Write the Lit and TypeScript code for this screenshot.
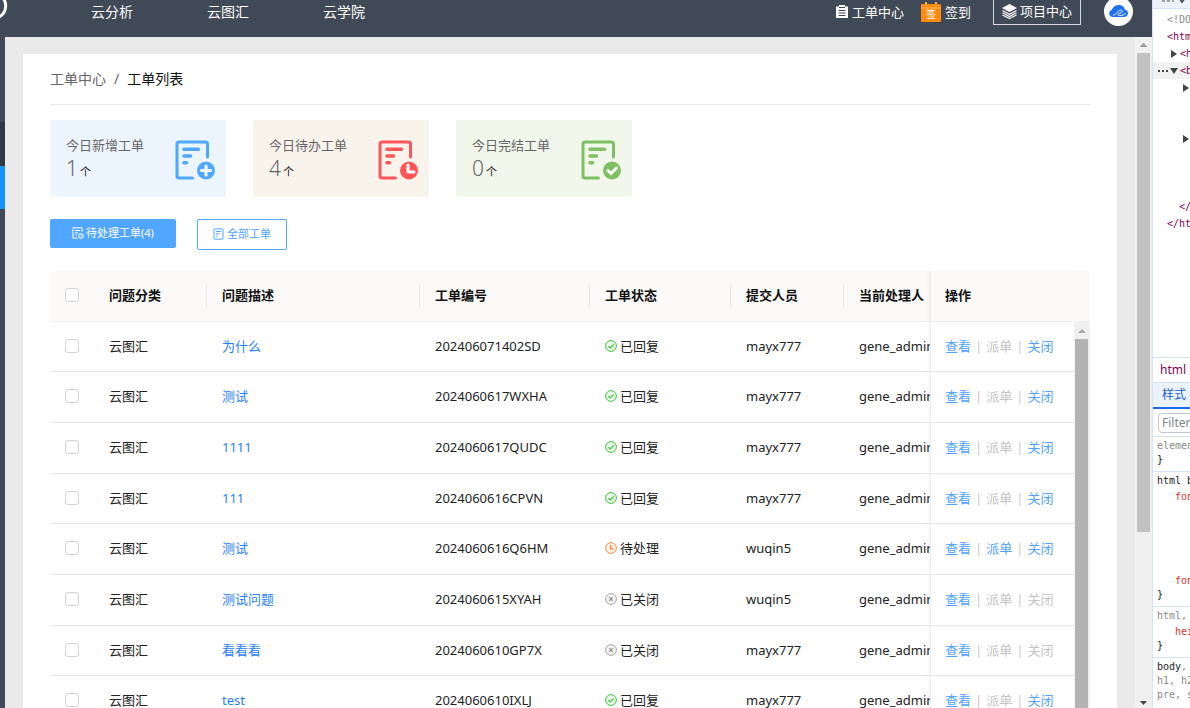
import { LitElement, html, css, svg } from "lit";
import { customElement, property } from "lit/decorators.js";
import { classMap } from "lit/directives/class-map.js";

type Status = "replied" | "pending" | "closed";

interface Ticket {
  category: string;
  title: string;
  code: string;
  status: Status;
  submitter: string;
  handler: string;
  canAssign: boolean;
  canClose: boolean;
}

const ticket = (
  title: string,
  code: string,
  status: Status,
  submitter: string,
  canAssign: boolean,
  canClose: boolean
): Ticket => ({ category: "云图汇", title, code, status, submitter, handler: "gene_admin", canAssign, canClose });

const TICKETS: Ticket[] = [
  ticket("为什么", "202406071402SD", "replied", "mayx777", false, true),
  ticket("测试", "2024060617WXHA", "replied", "mayx777", false, true),
  ticket("1111", "2024060617QUDC", "replied", "mayx777", false, true),
  ticket("111", "2024060616CPVN", "replied", "mayx777", false, true),
  ticket("测试", "2024060616Q6HM", "pending", "wuqin5", true, true),
  ticket("测试问题", "2024060615XYAH", "closed", "wuqin5", false, false),
  ticket("看看看", "2024060610GP7X", "closed", "mayx777", false, false),
  ticket("test", "2024060610IXLJ", "replied", "mayx777", false, true),
];

const STATUS_LABEL: Record<Status, string> = { replied: "已回复", pending: "待处理", closed: "已关闭" };

const STATUS_ICON = {
  replied: svg`<circle cx="6" cy="6" r="5.4" fill="#eefbea" stroke="#3cc13b"/><path d="M3.4 6.2l1.9 1.8 3.4-3.7" fill="none" stroke="#3cc13b" stroke-width="1.2"/>`,
  pending: svg`<circle cx="6" cy="6" r="5.4" fill="#fff3e8" stroke="#fa8c3c"/><path d="M5.7 3v3.8h2.8" fill="none" stroke="#fa7a2a" stroke-width="1.2"/>`,
  closed: svg`<circle cx="6" cy="6" r="5.4" fill="#f3f3f3" stroke="#a6a6a6"/><path d="M4.2 4.2l3.6 3.6M7.8 4.2l-3.6 3.6" fill="none" stroke="#8f8f8f" stroke-width="1.2"/>`,
};

const STAT_MARK = {
  add: svg`<path d="M31 26v9M26.500 30.500h9" stroke="#fff" stroke-width="3" stroke-linecap="round"/>`,
  wait: svg`<path d="M30 25v7h6" fill="none" stroke="#fff" stroke-width="3" stroke-linecap="round" stroke-linejoin="round"/>`,
  done: svg`<path d="M27 30.500l3 3 5.500-5.500" fill="none" stroke="#fff" stroke-width="3" stroke-linecap="round"/>`,
};

type Mark = keyof typeof STAT_MARK;

@customElement("stat-card")
class StatCard extends LitElement {
  @property() label = "";
  @property() count = "";
  @property() mark: Mark = "add";

  static styles = css`
    :host { display: block; }
    .card {
      display: flex;
      align-items: center;
      justify-content: space-between;
      box-sizing: border-box;
      height: 77px;
      padding: 2px 11px 0 16px;
      border-radius: 2px;
      color: #666;
    }
    .add { background: #ecf5fd; }
    .wait { background: #f8f4ec; }
    .done { background: #f1f7ea; }
    .label { font-size: 13px; line-height: 20px; margin: 0; }
    .value { font-size: 21px; line-height: 27px; margin: 0; font-weight: 300; }
    .unit { font-size: 11px; color: #111; font-weight: 400; margin-left: 2px; }
    .icon { width: 40px; height: 40px; flex: none; }
    .add .icon { color: #4fa8ff; }
    .wait .icon { color: #ff5558; }
    .done .icon { color: #7fc063; }
  `;

  render() {
    return html`
      <div class="card ${this.mark}">
        <div>
          <p class="label">${this.label}</p>
          <p class="value">${this.count}<span class="unit">个</span></p>
        </div>
        <svg class="icon" viewBox="0 0 40 40" aria-hidden="true">
          <g fill="none" stroke="currentColor" stroke-width="3" stroke-linecap="round">
            <path d="M32.500 17V4a2 2 0 0 0-2-2H4a2 2 0 0 0-2 2v32a2 2 0 0 0 2 2h13.500" />
            <path stroke-width="3.600" d="M9 9.200h14.500M9 16h6.500M9 22.700h2.500" />
          </g>
          <circle cx="31" cy="30.500" r="9" fill="currentColor" />
          ${STAT_MARK[this.mark]}
        </svg>
      </div>
    `;
  }
}

@customElement("ticket-table")
class TicketTable extends LitElement {
  @property({ attribute: false }) rows: Ticket[] = [];

  static styles = css`
    :host { display: flex; }
    table {
      flex: 1;
      width: 100%;
      min-width: 0;
      table-layout: fixed;
      border-collapse: separate;
      border-spacing: 0;
      font-size: 13px;
      line-height: 20px;
      color: #222;
    }
    .c-check { width: 44px; }
    .c-category { width: 113px; }
    .c-code { width: 170px; }
    .c-status { width: 141px; }
    .c-submitter { width: 113px; }
    .c-handler { width: 86px; }
    .c-action { width: 144px; }
    th, td {
      box-sizing: border-box;
      height: 51px;
      padding: 0 0 2px 15px;
      text-align: left;
      white-space: nowrap;
      overflow: hidden;
      border-bottom: 1px solid #e8e8e8;
    }
    tbody tr:nth-child(3n + 1) td { height: 50px; }
    th { background: #fbfaf9; font-weight: 600; color: #111; border-bottom-color: #edf1f5; }
    .divided { background: linear-gradient(#e8e8e8, #e8e8e8) right center / 1px 22px no-repeat #fbfaf9; }
    .fixed { padding-left: 14px; border-left: 1px solid #eee; box-shadow: -2px 0 2px rgba(0, 0, 0, 0.03); }
    input {
      appearance: none;
      display: block;
      width: 14px;
      height: 14px;
      margin: 0;
      box-sizing: border-box;
      border: 1px solid #d4d4d4;
      border-radius: 3px;
      background: #fff;
    }
    a { color: #2780fb; text-decoration: none; }
    .status { display: flex; align-items: center; gap: 3px; }
    .status svg { width: 12px; height: 12px; }
    .actions { display: flex; gap: 4px; color: #c8c8c8; }
    .actions button {
      padding: 0;
      border: 0;
      background: none;
      font: inherit;
      color: #4fa3ff;
    }
    .actions button:disabled { color: #c4c4c4; }
    .rail { display: flex; flex-direction: column; width: 16px; }
    .rail-head { height: 50px; background: #fbfaf9; border-bottom: 1px solid #edf1f5; }
    .track { flex: 1; background: #f0f0f0; display: flex; flex-direction: column; }
    .arrow { height: 17px; display: block; }
    .thumb { flex: 1; margin: 0 2px 0 1px; background: #b3b3b3; }
  `;

  render() {
    return html`
      <table>
        <colgroup>
          <col class="c-check" /><col class="c-category" /><col /><col class="c-code" /><col class="c-status" />
          <col class="c-submitter" /><col class="c-handler" /><col class="c-action" />
        </colgroup>
        <thead>
          <tr>
            <th><input type="checkbox" aria-label="全选" /></th>
            <th class="divided">问题分类</th>
            <th class="divided">问题描述</th>
            <th class="divided">工单编号</th>
            <th class="divided">工单状态</th>
            <th class="divided">提交人员</th>
            <th>当前处理人</th>
            <th class="fixed">操作</th>
          </tr>
        </thead>
        <tbody>
          ${this.rows.map(
            (t) => html`
              <tr>
                <td><input type="checkbox" aria-label=${t.code} /></td>
                <td>${t.category}</td>
                <td><a href="#">${t.title}</a></td>
                <td>${t.code}</td>
                <td>
                  <div class="status">
                    <svg viewBox="0 0 12 12" aria-hidden="true">${STATUS_ICON[t.status]}</svg>
                    <span>${STATUS_LABEL[t.status]}</span>
                  </div>
                </td>
                <td>${t.submitter}</td>
                <td>${t.handler}</td>
                <td class="fixed">
                  <div class="actions">
                    <button>查看</button><span>|</span>
                    <button ?disabled=${!t.canAssign}>派单</button><span>|</span>
                    <button ?disabled=${!t.canClose}>关闭</button>
                  </div>
                </td>
              </tr>
            `
          )}
        </tbody>
      </table>
      <div class="rail">
        <div class="rail-head"></div>
        <div class="track">
          <svg class="arrow" viewBox="0 0 16 17"><path d="M4 11h8l-4-4z" fill="#a8a8a8" /></svg>
          <div class="thumb"></div>
        </div>
      </div>
    `;
  }
}

interface TreeLine {
  text: string;
  indent: number;
  arrow?: "right" | "down";
  kind?: "muted" | "selected";
}

const TREE: TreeLine[] = [
  { text: "<!DOCTYPE html>", indent: 14, kind: "muted" },
  { text: "<html>", indent: 14 },
  { text: "<head>", indent: 27, arrow: "right" },
  { text: "<body>", indent: 27, arrow: "down", kind: "selected" },
  { text: "", indent: 39, arrow: "right" },
  { text: "", indent: 0 },
  { text: "", indent: 0 },
  { text: "", indent: 39, arrow: "right" },
  { text: "", indent: 0 },
  { text: "", indent: 0 },
  { text: "", indent: 0 },
  { text: "</body>", indent: 26 },
  { text: "</html>", indent: 14 },
];

@customElement("inspector-panel")
class InspectorPanel extends LitElement {
  static styles = css`
    :host {
      display: flex;
      flex-direction: column;
      box-sizing: border-box;
      overflow: hidden;
      border-left: 1px solid #d3e3fd;
      background: #fff;
      font: 10px/14px "DejaVu Sans Mono", "Liberation Mono", monospace;
      white-space: nowrap;
      color: #202124;
    }
    .strip { flex: none; height: 8px; background: #edf2fa; border-bottom: 1px solid #d3e3fd; }
    .strip svg { display: block; width: 37px; height: 8px; }
    .tree { flex: none; height: 346px; padding-top: 2px; }
    .line { display: flex; height: 17px; line-height: 17px; color: #85004f; }
    .line.muted { color: #8a8a8a; }
    .line.selected { background: #f1f1f1; }
    .gutter { flex: none; display: flex; align-items: center; justify-content: flex-end; gap: 1px; box-sizing: border-box; padding-right: 2px; }
    .gutter svg { width: 8px; height: 8px; flex: none; }
    .gutter .dots { width: 11px; }
    .i0 { width: 0; padding: 0; }
    .i14 { width: 14px; }
    .i26 { width: 26px; }
    .i27 { width: 27px; }
    .i39 { width: 39px; }
    .crumb { flex: none; height: 24px; padding-left: 7px; border-top: 1px solid #d3e3fd; font: 12px/24px "Noto Sans", sans-serif; color: #85004f; }
    .tab { flex: none; height: 27px; padding: 0 0 0 9px; border: 0; border-top: 1px solid #d3e3fd; border-bottom: 2px solid #1a6bf0; background: #edf3fd; text-align: left; font: 12px/24px "Noto Sans", "Noto Sans CJK SC", sans-serif; color: #1a5fd8; }
    .filter { flex: none; display: flex; height: 27px; align-items: center; padding-left: 5px; border-bottom: 1px solid #d3e3fd; }
    .filter input { box-sizing: border-box; width: 120px; height: 20px; flex: none; padding: 0 3px; border: 1px solid #c4c7cc; border-radius: 4px; font: 12px/18px "Noto Sans", sans-serif; }
    .filter input::placeholder { color: #80868b; opacity: 1; }
    .rule { flex: none; padding: 2px 0 4px 4px; border-bottom: 1px solid #d3e3fd; }
    .selector { height: 14px; }
    .grey { color: #8a8a8a; }
    .decls { padding: 2px 0 0 18px; color: #dc362e; }
    .decl { height: 14px; }
  `;

  private arrow(dir: "right" | "down") {
    return html`<svg viewBox="0 0 8 8"><path d=${dir === "right" ? "M1 0l6 4-6 4z" : "M0 1h8L4 7z"} fill="#444" /></svg>`;
  }

  render() {
    return html`
      <div class="strip">
        <svg viewBox="0 0 37 8" aria-hidden="true">
          <path d="M9 1h3M14 1h3M19 1h2M27 0l2 3 2-3z" stroke="#555" fill="#555" />
        </svg>
      </div>
      <div class="tree">
        ${TREE.map(
          (l) => html`
            <div class=${classMap({ line: true, muted: l.kind === "muted", selected: l.kind === "selected" })}>
              <span class="gutter i${l.indent}">
                ${l.kind === "selected"
                  ? html`<svg class="dots" viewBox="0 0 11 8"><path d="M0 4h2M4 4h2M8 4h2" stroke="#444" stroke-width="2" /></svg>`
                  : ""}
                ${l.arrow ? this.arrow(l.arrow) : ""}
              </span>
              <span>${l.text}</span>
            </div>
          `
        )}
      </div>
      <div class="crumb">html</div>
      <button class="tab">样式</button>
      <div class="filter"><input type="text" placeholder="Filter" aria-label="Filter" /></div>
      <div class="rule">
        <div class="selector grey">element.style {</div>
        <div>}</div>
      </div>
      <div class="rule">
        <div class="selector">html body {</div>
        <div class="decls">
          <div class="decl">font-family:</div>
          <div class="decl"></div><div class="decl"></div><div class="decl"></div>
          <div class="decl"></div><div class="decl"></div>
          <div class="decl">font-size:</div>
        </div>
        <div>}</div>
      </div>
      <div class="rule">
        <div class="selector grey">html, body {</div>
        <div class="decls"><div class="decl">height:</div></div>
        <div>}</div>
      </div>
      <div class="rule">
        <div class="selector">body<span class="grey">, div,</span></div>
        <div class="selector grey">h1, h2, h3,</div>
        <div class="selector grey">pre, span,</div>
        <div class="decls"><div class="decl">margin:</div></div>
      </div>
    `;
  }
}

@customElement("app-root")
class AppRoot extends LitElement {
  static styles = css`
    :host {
      display: grid;
      grid-template-columns: minmax(0, 1fr) 38px;
      height: 100vh;
      overflow: hidden;
      font-family: "Noto Sans", "Noto Sans CJK SC", sans-serif;
      font-size: 13px;
    }
    .app { display: flex; flex-direction: column; min-height: 0; }
    .top {
      flex: none;
      display: flex;
      align-items: flex-start;
      box-sizing: border-box;
      height: 37px;
      padding-right: 19px;
      background: #404a56;
      color: #fff;
      line-height: 24px;
      overflow: hidden;
    }
    .top a { color: inherit; text-decoration: none; }
    .brand { width: 91px; height: 24px; flex: none; }
    .nav { display: flex; gap: 74px; font-size: 14px; }
    .tools { display: flex; align-items: flex-start; margin-left: auto; }
    .tool { display: flex; align-items: center; gap: 4px; height: 23px; }
    .tool + .tool { margin-left: 17px; }
    .top .project {
      display: flex;
      align-items: center;
      gap: 3px;
      height: 25px;
      margin: 0 23px 0 22px;
      padding: 0 8px 2px;
      border: 1px solid #d8dade;
      border-top: 0;
      background: none;
      color: #fff;
      font: inherit;
    }
    .i-list { width: 12px; height: 13px; }
    .i-sign { width: 20px; height: 20px; }
    .i-stack { width: 15px; height: 15px; }
    .avatar { width: 29px; height: 29px; margin-top: -3px; }

    .body { flex: 1; display: flex; min-height: 0; }
    .side { flex: none; width: 5px; background: #404a56; }
    .side-group { height: 85px; }
    .side-open { height: 44px; background: #303945; }
    .side-active { height: 43px; background: #1890ff; }
    .page { flex: 1; min-width: 0; padding: 17px 18px 0; background: #eaeaea; overflow: hidden; }
    .sheet { box-sizing: border-box; min-height: 100%; padding: 0 27px; background: #fff; }
    .crumbs { display: flex; gap: 8px; height: 50px; line-height: 50px; border-bottom: 1px solid #e6eaea; font-size: 14px; color: #666; }
    .crumbs a { color: inherit; text-decoration: none; }
    .here { color: #111; }
    .stats { display: grid; grid-template-columns: repeat(3, 176px); gap: 27px; margin-top: 15px; }
    .filters { display: flex; align-items: flex-start; gap: 21px; margin: 22px 0 21px; }
    .filters button { display: flex; align-items: center; box-sizing: border-box; gap: 2px; border: 1px solid #4fa7ff; border-radius: 2px; font: inherit; font-size: 11px; line-height: 16px; }
    .filters .primary { height: 29px; padding: 0 21px 1px; background: #51a7ff; color: #fff; }
    .filters .plain { height: 31px; padding: 0 15px 1px; background: #fff; color: #4fa3ff; }
    .filters svg { width: 12px; height: 12px; }

    .bar { flex: none; width: 17px; display: flex; flex-direction: column; background: #f0f0f0; }
    .bar svg { flex: none; width: 17px; height: 16px; }
    .grip { height: 479px; margin: 0 2px; background: #c1c1c1; }
    .bar .down { margin-top: auto; }
  `;

  render() {
    return html`
      <div class="app">
        <header class="top">
          <svg class="brand" viewBox="0 0 91 24" aria-hidden="true">
            <path d="M3 -2C7 3 7 13 -1 17" fill="none" stroke="#fff" stroke-width="3" />
          </svg>
          <nav class="nav"><a href="#">云分析</a><a href="#">云图汇</a><a href="#">云学院</a></nav>
          <div class="tools">
            <a class="tool" href="#">
              <svg class="i-list" viewBox="0 0 12 13" aria-hidden="true">
                <path d="M0 1.500h3V0h6v1.500h3V13H0z" fill="#fff" />
                <path d="M3 2.500h6M2.500 5.500h7M2.500 8h7M2.500 10.500h7" stroke="#404a56" />
              </svg>
              工单中心
            </a>
            <a class="tool" href="#">
              <svg class="i-sign" viewBox="0 0 20 20" aria-hidden="true">
                <rect y="2" width="20" height="18" rx="1" fill="#ff8a0c" />
                <path d="M0 6h20" stroke="#ffb45c" />
                <path d="M5 0v4M15 0v4" stroke="#ffa63d" stroke-width="2" />
                <text x="10" y="16" text-anchor="middle" font-size="10" fill="#fff">签</text>
              </svg>
              签到
            </a>
            <button class="project">
              <svg class="i-stack" viewBox="0 0 15 15" aria-hidden="true">
                <path d="M7.500 0L15 4 7.500 8 0 4z" fill="#fff" />
                <path d="M.5 6.500l7 3.700 7-3.700M.5 8.800l7 3.700 7-3.700M.5 11l7 3.500 7-3.500" fill="none" stroke="#fff" stroke-width="1.200" />
              </svg>
              项目中心
            </button>
            <svg class="avatar" viewBox="0 0 29 29" aria-hidden="true">
              <circle cx="14.500" cy="14.500" r="14.500" fill="#fff" />
              <path d="M8.500 20a3.600 3.600 0 0 1-.8-7C9 9.500 12 8 14.800 8c3.300 0 5.400 1.700 6 4.500 2 .5 3.200 2 3.200 3.800 0 2.200-1.700 3.700-4 3.700z" fill="#1f6ff2" />
              <path d="M9 18.300c3.500 0 4.500-5.300 7.800-5.300 1.800 0 2.200 1.500 1 2.400-1 .7-2.600.6-3.500 1.500-.8.900 0 1.700 1.500 1.700 2.500 0 4.500-1 6-2.300" fill="none" stroke="#fff" stroke-width=".9" />
            </svg>
          </div>
        </header>
        <div class="body">
          <aside class="side">
            <div class="side-group"></div>
            <div class="side-open"></div>
            <div class="side-active"></div>
          </aside>
          <main class="page">
            <div class="sheet">
              <nav class="crumbs"><a href="#">工单中心</a><span>/</span><span class="here">工单列表</span></nav>
              <section class="stats">
                <stat-card label="今日新增工单" count="1" mark="add"></stat-card>
                <stat-card label="今日待办工单" count="4" mark="wait"></stat-card>
                <stat-card label="今日完结工单" count="0" mark="done"></stat-card>
              </section>
              <div class="filters">
                <button class="primary">
                  <svg viewBox="0 0 12 12" aria-hidden="true">
                    <path d="M10 5V.8H1v10.400h4.500M3 3.500h5M3 5.800h3M3 8h1.500" fill="none" stroke="#fff" />
                    <circle cx="9" cy="9" r="2.400" fill="none" stroke="#fff" />
                    <path d="M9 7.700V9.200h1.200" fill="none" stroke="#fff" stroke-width=".8" />
                  </svg>
                  待处理工单(4)
                </button>
                <button class="plain">
                  <svg viewBox="0 0 12 12" aria-hidden="true">
                    <rect x="1" y=".8" width="9" height="10.400" rx="1" fill="none" stroke="#4fa7ff" />
                    <path d="M3 3.500h5M3 5.800h3.500M3 8h1.500" stroke="#4fa7ff" />
                  </svg>
                  全部工单
                </button>
              </div>
              <ticket-table .rows=${TICKETS}></ticket-table>
            </div>
          </main>
          <div class="bar">
            <svg viewBox="0 0 17 16"><path d="M4.500 10h8l-4-4z" fill="#9a9a9a" /></svg>
            <div class="grip"></div>
            <svg class="down" viewBox="0 0 17 16"><path d="M5 9h7l-3.500 4z" fill="#444" /></svg>
          </div>
        </div>
      </div>
      <inspector-panel></inspector-panel>
    `;
  }
}
